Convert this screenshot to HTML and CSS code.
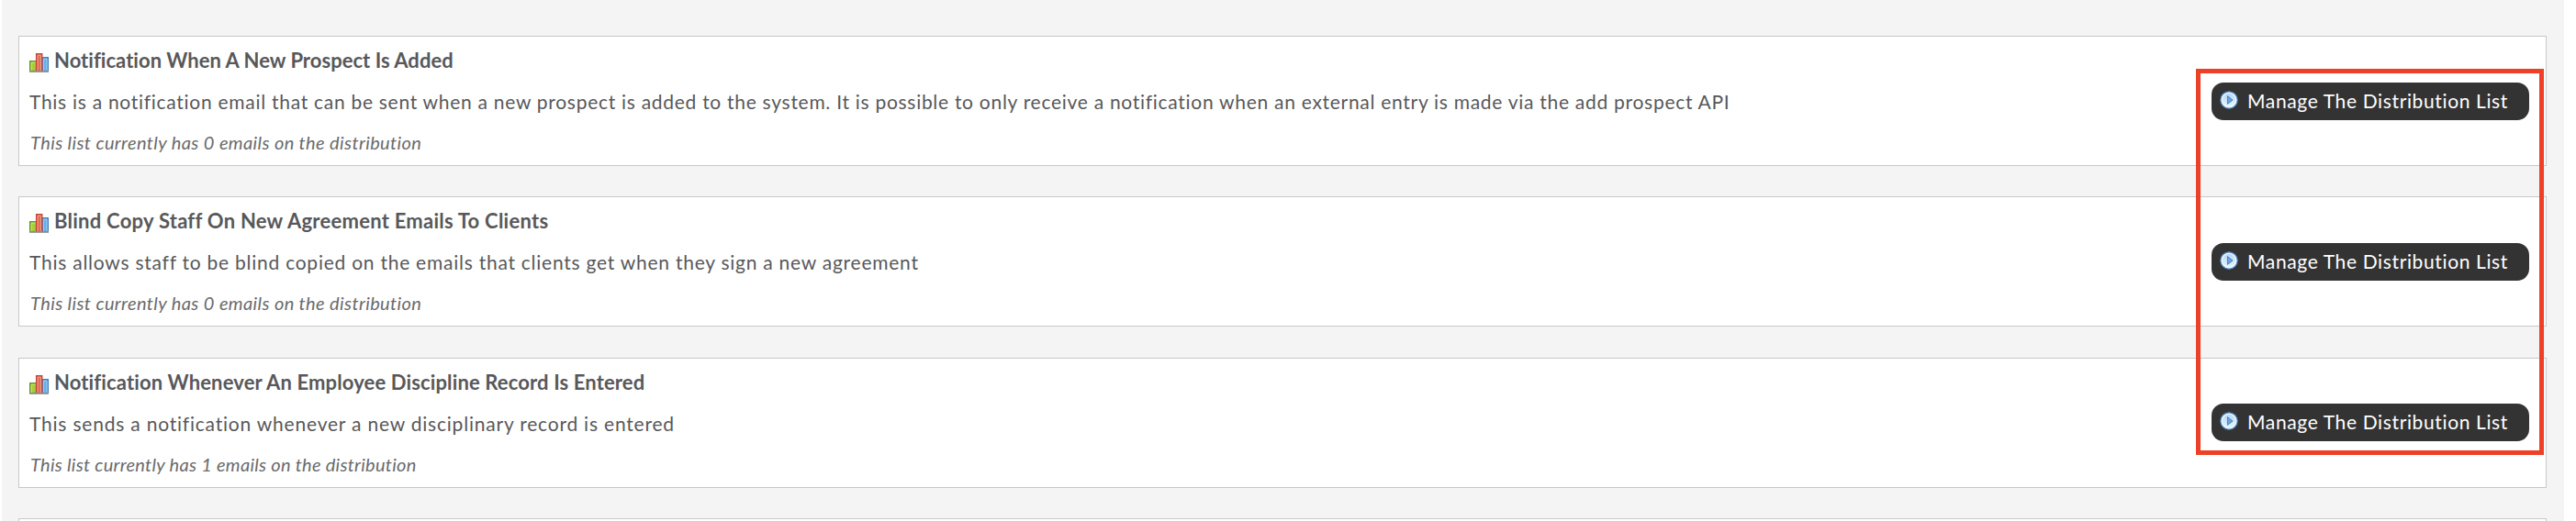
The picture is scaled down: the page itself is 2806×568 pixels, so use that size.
FILE: index.html
```html
<!DOCTYPE html>
<html lang="en">
  <head>
    <meta charset="UTF-8" />
    <meta name="viewport" content="width=device-width, initial-scale=1.0" />
    <title>Distribution Lists</title>
    <link rel="stylesheet" href="styles.css">
  </head>
  <body>
    <!-- shared icons -->
    <svg class="sprite" width="0" height="0">
      <defs>
        <linearGradient id="disc" x1="0" y1="0" x2="0" y2="1">
          <stop offset="0" stop-color="#b9d8f5" />
          <stop offset="1" stop-color="#e6f4ff" />
        </linearGradient>
      </defs>
      <symbol id="icon-chart" viewBox="0 0 21 21">
        <rect x="0.7" y="8.7" width="6.8" height="10.8" fill="#a5cf35" stroke="#5f8c2c" stroke-width="1.3" />
        <path d="M2.2 19V10.2H6.5" fill="none" stroke="#c9e678" stroke-width="1" />
        <rect x="14" y="4.7" width="6.4" height="14.8" fill="#62adea" stroke="#3f78b8" stroke-width="1.3" />
        <path d="M15.6 19V6.2H19V19" fill="none" stroke="#a4d2f6" stroke-width="1" />
        <rect x="7.6" y="0.7" width="6.2" height="18.8" fill="#e06a52" stroke="#c24536" stroke-width="1.3" />
        <path d="M9.1 19V2.2H12.4V19" fill="none" stroke="#f0a08c" stroke-width="1" />
        <rect x="0" y="19" width="21" height="1.8" fill="#8c8c8c" />
      </symbol>
      <symbol id="icon-play" viewBox="0 0 20 20">
        <circle cx="10" cy="10" r="9.2" fill="#f4faff" stroke="#4f86c4" stroke-width="1.2" />
        <circle cx="10" cy="10" r="7.2" fill="url(#disc)" />
        <path d="M8.4 5.6L14 10L8.4 14.4Z" fill="#6ea7dc" stroke="#4a80bd" stroke-width="1" />
      </symbol>
    </svg>

    <div class="page">
      <div class="card card-prospect">
        <div class="info">
          <div class="title"><svg class="chart"><use href="#icon-chart" /></svg><span>Notification When A New Prospect Is Added</span></div>
          <p class="description">This is a notification email that can be sent when a new prospect is added to the system. It is possible to only receive a notification when an external entry is made via the add prospect API</p>
          <p class="count">This list currently has 0 emails on the distribution</p>
        </div>
        <button class="manage"><svg class="play"><use href="#icon-play" /></svg><span>Manage The Distribution List</span></button>
      </div>

      <div class="card card-agreement">
        <div class="info">
          <div class="title"><svg class="chart"><use href="#icon-chart" /></svg><span>Blind Copy Staff On New Agreement Emails To Clients</span></div>
          <p class="description">This allows staff to be blind copied on the emails that clients get when they sign a new agreement</p>
          <p class="count">This list currently has 0 emails on the distribution</p>
        </div>
        <button class="manage"><svg class="play"><use href="#icon-play" /></svg><span>Manage The Distribution List</span></button>
      </div>

      <div class="card card-discipline">
        <div class="info">
          <div class="title"><svg class="chart"><use href="#icon-chart" /></svg><span>Notification Whenever An Employee Discipline Record Is Entered</span></div>
          <p class="description">This sends a notification whenever a new disciplinary record is entered</p>
          <p class="count">This list currently has 1 emails on the distribution</p>
        </div>
        <button class="manage"><svg class="play"><use href="#icon-play" /></svg><span>Manage The Distribution List</span></button>
      </div>

      <div class="card"></div>

      <div class="highlight"></div>
    </div>
  </body>
</html>
```
FILE: styles.css
```css
* {
  box-sizing: border-box;
}
body {
  margin: 0;
  height: 568px;
  overflow: hidden;
  background: #fff;
  color: #58585a;
  font-family: Lato, sans-serif;
}
.sprite {
  position: absolute;
}
.page {
  position: relative;
  width: 2791px;
  height: 568px;
  margin-left: 2px;
  padding: 39px 19px 0 18px;
  overflow: hidden;
  background: #f4f4f4;
}
.card {
  display: flex;
  justify-content: space-between;
  align-items: flex-start;
  height: 142px;
  margin-bottom: 33.3px;
  padding: 3px 18px 0 11px;
  background: #fff;
  border: 1px solid #c8c8c8;
}
.title {
  display: flex;
  height: 45px;
  line-height: 46px;
  font-size: 22px;
  font-weight: bold;
  letter-spacing: 0.03px;
  white-space: nowrap;
}
.chart {
  width: 21px;
  height: 21px;
  margin: 15px 6px 0 0;
}
.description,
.count {
  margin: 0;
  line-height: 45px;
  white-space: nowrap;
}
.description {
  font-size: 21px;
  letter-spacing: 0.715px;
}
.count {
  padding-left: 1px;
  color: #6a6a6c;
  font-size: 20px;
  font-style: italic;
  letter-spacing: 0.39px;
}
.card-agreement .title {
  letter-spacing: 0.25px;
}
.card-agreement .description {
  letter-spacing: 0.75px;
}
.card-discipline .title {
  letter-spacing: 0.13px;
}
.card-discipline .description {
  letter-spacing: 0.79px;
}
.card-discipline .count {
  letter-spacing: 0.28px;
}
.manage {
  display: flex;
  width: 346px;
  height: 41px;
  margin-top: 47px;
  padding: 0 0 0 9px;
  background: #333;
  border: none;
  border-radius: 13px;
  color: #fff;
  font-family: inherit;
  font-size: 21px;
  line-height: 40px;
  letter-spacing: 0.63px;
  white-space: nowrap;
  cursor: pointer;
}
.card-discipline .manage {
  margin-top: 46px;
}
.play {
  width: 20px;
  height: 20px;
  margin: 9px 10px 0 0;
}
/* red frame drawn over the manage buttons */
.highlight {
  position: absolute;
  top: 75px;
  left: 2390px;
  width: 379px;
  height: 421px;
  border: 5px solid #ee4026;
}
```
